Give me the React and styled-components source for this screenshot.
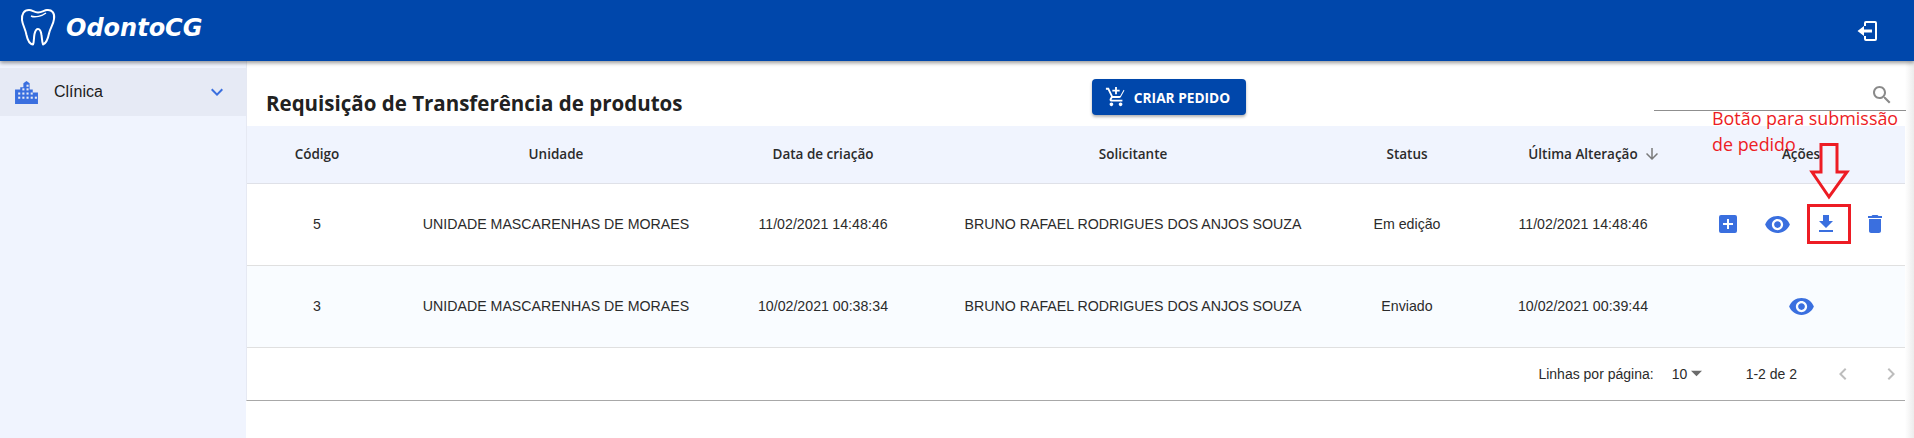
import React from "react";
import styled, { createGlobalStyle } from "styled-components";

const Global = createGlobalStyle`
  html, body { margin: 0; padding: 0; background: #fff; }
  * { box-sizing: border-box; }
  body { font-family: "Liberation Sans", Arial, sans-serif; overflow: hidden; }
`;
const Page = styled.div`
  position: relative;
  width: 1914px;
  height: 438px;
  overflow: hidden;
  display: flex;
  flex-direction: column;
`;
const TopBar = styled.header`
  height: 61px;
  flex: none;
  background: #0047ab;
  box-shadow: 0 2px 4px rgba(0, 0, 0, 0.4);
  display: flex;
  align-items: center;
  justify-content: space-between;
  padding: 0 35px 0 20px;
  position: relative;
  z-index: 2;
`;
const Brand = styled.div`
  display: flex;
  align-items: center;
  gap: 10px;
  color: #fff;
  font-family: "DejaVu Sans", sans-serif;
  font-style: italic;
  font-weight: 700;
  font-size: 24px;
  margin-top: -6px;
`;
const Body = styled.div`
  flex: 1;
  display: flex;
  min-height: 0;
`;
const Sidebar = styled.aside`
  width: 246px;
  flex: none;
  background: #f0f4fe;
  padding-top: 7px;
`;
const MenuItem = styled.div`
  height: 48px;
  background: #e6eaf5;
  display: flex;
  align-items: center;
  padding: 0 17px 0 14px;
  color: #1c1c1c;
  font-family: "Liberation Sans", sans-serif;
  font-size: 16px;
`;
const MenuLabel = styled.span`
  margin-left: 15px;
  flex: 1;
`;
const Main = styled.main`
  flex: 1;
  display: flex;
  background: linear-gradient(to right, #fff 0, #fff 1659px, #ececec 1668px);
`;
const Card = styled.section`
  width: 1659px;
  height: 340px;
  background: #fff;
  border-bottom: 1px solid #a8a8a8;
  border-left: 1px solid #e6e9f3;
  display: flex;
  flex-direction: column;
`;
const Toolbar = styled.div`
  height: 65px;
  flex: none;
  position: relative;
  display: flex;
  align-items: center;
  padding: 18px 0 0 19px;
`;
const Title = styled.h1`
  margin: 0;
  color: #212121;
  font-family: "Open Sans", sans-serif;
  font-size: 20.5px;
  font-weight: 700;
`;
const CreateButton = styled.button`
  position: absolute;
  left: 845px;
  top: 18px;
  width: 154px;
  height: 36px;
  border: 0;
  border-radius: 4px;
  background: #0047ab;
  color: #fff;
  box-shadow: 0 2px 3px rgba(0, 0, 0, 0.3);
  display: flex;
  align-items: center;
  justify-content: center;
  gap: 7px;
  font-family: "Open Sans", sans-serif;
  font-weight: 700;
  font-size: 13.7px;
  padding: 0 3px 0 0;
`;
const SearchField = styled.div`
  position: absolute;
  right: -1px;
  top: 0;
  width: 252px;
  height: 50px;
  border-bottom: 1px solid #8f8f8f;
  display: flex;
  align-items: flex-end;
  justify-content: flex-end;
  padding: 0 12px 3px 0;
`;
const Table = styled.table`
  border-collapse: collapse;
  table-layout: fixed;
  width: 1658px;
`;
const Th = styled.th`
  height: 57px;
  padding: 0;
  background: #f0f4fe;
  border-bottom: 1px solid #dfe1e8;
  color: #2b2b2b;
  font-family: "Open Sans", sans-serif;
  font-size: 13.5px;
  font-weight: 600;
  text-align: center;
`;
const Row = styled.tr`
  background: ${(p) => (p.$alt ? "#f9fcff" : "#fff")};
`;
const Td = styled.td`
  height: 82px;
  padding: 0;
  border-bottom: 1px solid #e0e0e0;
  color: #2b2b2b;
  font-size: 14.2px;
  text-align: center;
`;
const SortWrap = styled.span`
  display: inline-flex;
  align-items: center;
  gap: 5px;
  margin-right: -23px;
`;
const Actions = styled.div`
  display: flex;
  justify-content: center;
  padding-left: 1px;
`;
const ActionSlot = styled.span`
  width: 49px;
  display: flex;
  justify-content: center;
  align-items: center;
`;
const Pagination = styled.div`
  flex: 1;
  display: flex;
  align-items: center;
  justify-content: flex-end;
  padding-right: 2px;
  color: #2b2b2b;
  font-size: 14px;
  font-family: "Liberation Sans", sans-serif;
`;
const PerPage = styled.span`
  display: flex;
  align-items: center;
  margin-left: 18px;
  width: 54px;
  gap: 4px;
`;
const Range = styled.span`
  margin-left: 20px;
  margin-right: 34px;
`;
const Pager = styled.span`
  display: flex;
  gap: 24px;
`;
const Note = styled.div`
  position: absolute;
  left: 1712px;
  top: 105px;
  width: 200px;
  color: #ed1c24;
  font-family: "Open Sans", sans-serif;
  font-size: 17.9px;
  line-height: 26px;
  z-index: 3;
`;
const Overlay = styled.svg`
  position: absolute;
  left: 1800px;
  top: 140px;
  z-index: 3;
`;

const cols = [140, 338, 196, 424, 124, 228, 208];

const Tooth = () => (
  <svg width="36" height="40" viewBox="0 0 36 40" fill="none" stroke="#fff" strokeWidth="2" strokeLinejoin="round">
    <path d="M9 2C4 2 1.500 6 2 12c.5 5 3.500 9 4.500 15 1 5 3.500 9 6.500 9.500 1.200-2 .7-7 1.500-10.500.7-3 2-5 3.500-5s3 2.500 3.500 6c.5 3 .5 7 1.500 9.500 3-1 5-6 6-11 1-5 4.500-9 5-14.500C35 5 32 1.500 27 2c-3 .3-5 2.500-9 2.500S12.500 2 9 2Z" />
    <path d="M11 8c4 2 11 0 15-3" strokeWidth="1.500" />
  </svg>
);
const Logout = () => (
  <svg width="24" height="24" viewBox="0 0 24 24" fill="#fff">
    <path d="M11 2h9a2 2 0 0 1 2 2v16a2 2 0 0 1-2 2h-9a2 2 0 0 1-2-2v-3h2v3h9V4h-9v3H9V4a2 2 0 0 1 2-2Z" />
    <path d="M9 7v3.500h8v3H9V17l-6.500-5L9 7Z" />
  </svg>
);
const Building = () => (
  <svg width="25" height="25" viewBox="0 0 24 24" fill="#3a6fdf">
    <path d="M1 9h5V7h3V3l3-2 3 2v6h3v3h5v11H1V9Z" />
    <g fill="#e6eaf5">
      <rect x="4" y="12" width="2" height="2" /><rect x="8" y="12" width="2" height="2" /><rect x="12" y="12" width="2" height="2" /><rect x="16" y="12" width="2" height="2" />
      <rect x="4" y="16" width="2" height="2" /><rect x="8" y="16" width="2" height="2" /><rect x="12" y="16" width="2" height="2" /><rect x="16" y="16" width="2" height="2" /><rect x="20" y="16" width="2" height="2" />
      <rect x="8" y="8" width="2" height="2" /><rect x="12" y="8" width="2" height="2" /><rect x="12" y="4.500" width="2" height="2" />
    </g>
  </svg>
);
const Chevron = () => (
  <svg width="24" height="24" viewBox="0 0 24 24" fill="#3a6fdf">
    <path d="M7.400 8.600 12 13.200l4.600-4.600L18 10l-6 6-6-6z" />
  </svg>
);
const Cart = () => (
  <svg width="22" height="22" viewBox="0 0 24 24" fill="#fff">
    <path d="M11 9h2V6h3V4h-3V1h-2v3H8v2h3v3zm-4 9c-1.100 0-2 .9-2 2s.9 2 2 2 2-.9 2-2-.9-2-2-2zm10 0c-1.100 0-2 .9-2 2s.9 2 2 2 2-.9 2-2-.9-2-2-2zM7.170 14.750l.03-.12.9-1.630h7.450c.75 0 1.410-.41 1.750-1.030l3.860-7.010L20.420 4h-.01l-1.100 2-2.760 5H8.530l-.13-.27L6.160 6l-.95-2-.94-2H1v2h2l3.600 7.590-1.350 2.450c-.16.280-.25.610-.25.960 0 1.100.9 2 2 2h12v-2H7.420c-.13 0-.25-.110-.25-.25z" />
  </svg>
);
const Search = () => (
  <svg width="24" height="24" viewBox="0 0 24 24" fill="#8a8a8a">
    <path d="M15.500 14h-.79l-.28-.27C15.410 12.590 16 11.110 16 9.500 16 5.910 13.090 3 9.500 3S3 5.910 3 9.500 5.910 16 9.500 16c1.610 0 3.090-.59 4.230-1.570l.27.28v.79l5 4.990L20.490 19l-4.990-5zm-6 0C7.010 14 5 11.990 5 9.500S7.010 5 9.500 5 14 7.010 14 9.500 11.990 14 9.500 14z" />
  </svg>
);
const ArrowDown = () => (
  <svg width="18" height="18" viewBox="0 0 24 24" fill="#7a7a7a">
    <path d="m20 12-1.410-1.410L13 16.170V4h-2v12.170l-5.580-5.590L4 12l8 8 8-8z" />
  </svg>
);
const Plus = () => (
  <svg width="24" height="24" viewBox="0 0 24 24" fill="#3a6fdf">
    <path d="M19 3H5a2 2 0 0 0-2 2v14a2 2 0 0 0 2 2h14a2 2 0 0 0 2-2V5a2 2 0 0 0-2-2zm-2 10h-4v4h-2v-4H7v-2h4V7h2v4h4v2z" />
  </svg>
);
const Eye = () => (
  <svg width="27" height="27" viewBox="0 0 24 24" fill="#3a6fdf">
    <path d="M12 4.500C7 4.500 2.730 7.610 1 12c1.730 4.390 6 7.500 11 7.500s9.270-3.110 11-7.500c-1.730-4.390-6-7.500-11-7.500zM12 17c-2.760 0-5-2.240-5-5s2.240-5 5-5 5 2.240 5 5-2.240 5-5 5zm0-8c-1.660 0-3 1.340-3 3s1.340 3 3 3 3-1.340 3-3-1.340-3-3-3z" />
  </svg>
);
const Download = () => (
  <svg width="24" height="24" viewBox="0 0 24 24" fill="#3a6fdf">
    <path d="M19 9h-4V3H9v6H5l7 7 7-7zM5 18v2h14v-2H5z" />
  </svg>
);
const Trash = () => (
  <svg width="24" height="24" viewBox="0 0 24 24" fill="#3a6fdf">
    <path d="M6 19c0 1.100.9 2 2 2h8c1.100 0 2-.9 2-2V7H6v12zM19 4h-3.500l-1-1h-5l-1 1H5v2h14V4z" />
  </svg>
);
const Caret = () => (
  <svg width="11" height="9" viewBox="7 9 10 7" fill="#6b6b6b">
    <path d="M7 10l5 5 5-5z" />
  </svg>
);
const Prev = () => (
  <svg width="24" height="24" viewBox="0 0 24 24" fill="#bdbdbd">
    <path d="M15.410 7.410 14 6l-6 6 6 6 1.410-1.410L10.830 12z" />
  </svg>
);
const Next = () => (
  <svg width="24" height="24" viewBox="0 0 24 24" fill="#bdbdbd">
    <path d="M10 6 8.590 7.410 13.170 12l-4.580 4.590L10 18l6-6z" />
  </svg>
);

const rows = [
  { id: 5, created: "11/02/2021 14:48:46", status: "Em edição", updated: "11/02/2021 14:48:46", full: true },
  { id: 3, created: "10/02/2021 00:38:34", status: "Enviado", updated: "10/02/2021 00:39:44", full: false },
];

export default function App() {
  return (
    <Page>
      <Global />
      <TopBar>
        <Brand>
          <Tooth />
          <span>OdontoCG</span>
        </Brand>
        <Logout />
      </TopBar>
      <Body>
        <Sidebar>
          <MenuItem>
            <Building />
            <MenuLabel>Clínica</MenuLabel>
            <Chevron />
          </MenuItem>
        </Sidebar>
        <Main>
          <Card>
            <Toolbar>
              <Title>Requisição de Transferência de produtos</Title>
              <CreateButton>
                <Cart />
                CRIAR PEDIDO
              </CreateButton>
              <SearchField>
                <Search />
              </SearchField>
            </Toolbar>
            <Table>
              <colgroup>
                {cols.map((w, i) => (
                  <col key={i} style={{ width: w }} />
                ))}
              </colgroup>
              <thead>
                <tr>
                  <Th>Código</Th>
                  <Th>Unidade</Th>
                  <Th>Data de criação</Th>
                  <Th>Solicitante</Th>
                  <Th>Status</Th>
                  <Th>
                    <SortWrap>
                      Última Alteração <ArrowDown />
                    </SortWrap>
                  </Th>
                  <Th>Ações</Th>
                </tr>
              </thead>
              <tbody>
                {rows.map((r, i) => (
                  <Row key={r.id} $alt={i === 1}>
                    <Td>{r.id}</Td>
                    <Td>UNIDADE MASCARENHAS DE MORAES</Td>
                    <Td>{r.created}</Td>
                    <Td>BRUNO RAFAEL RODRIGUES DOS ANJOS SOUZA</Td>
                    <Td>{r.status}</Td>
                    <Td>{r.updated}</Td>
                    <Td>
                      <Actions>
                        {r.full && (
                          <ActionSlot>
                            <Plus />
                          </ActionSlot>
                        )}
                        <ActionSlot>
                          <Eye />
                        </ActionSlot>
                        {r.full && (
                          <ActionSlot>
                            <Download />
                          </ActionSlot>
                        )}
                        {r.full && (
                          <ActionSlot>
                            <Trash />
                          </ActionSlot>
                        )}
                      </Actions>
                    </Td>
                  </Row>
                ))}
              </tbody>
            </Table>
            <Pagination>
              Linhas por página:
              <PerPage>
                10 <Caret />
              </PerPage>
              <Range>1-2 de 2</Range>
              <Pager>
                <Prev />
                <Next />
              </Pager>
            </Pagination>
          </Card>
        </Main>
      </Body>
      <Note>
        Botão para submissão
        <br />
        de pedido
      </Note>
      <Overlay width="60" height="110" viewBox="0 0 60 110" fill="none" stroke="#ed1c24" strokeWidth="3">
        <path d="M21 4.500h16V32h10L29 57 12 32h9V4.500Z" />
        <rect x="8.500" y="65.500" width="41" height="37" />
      </Overlay>
    </Page>
  );
}
